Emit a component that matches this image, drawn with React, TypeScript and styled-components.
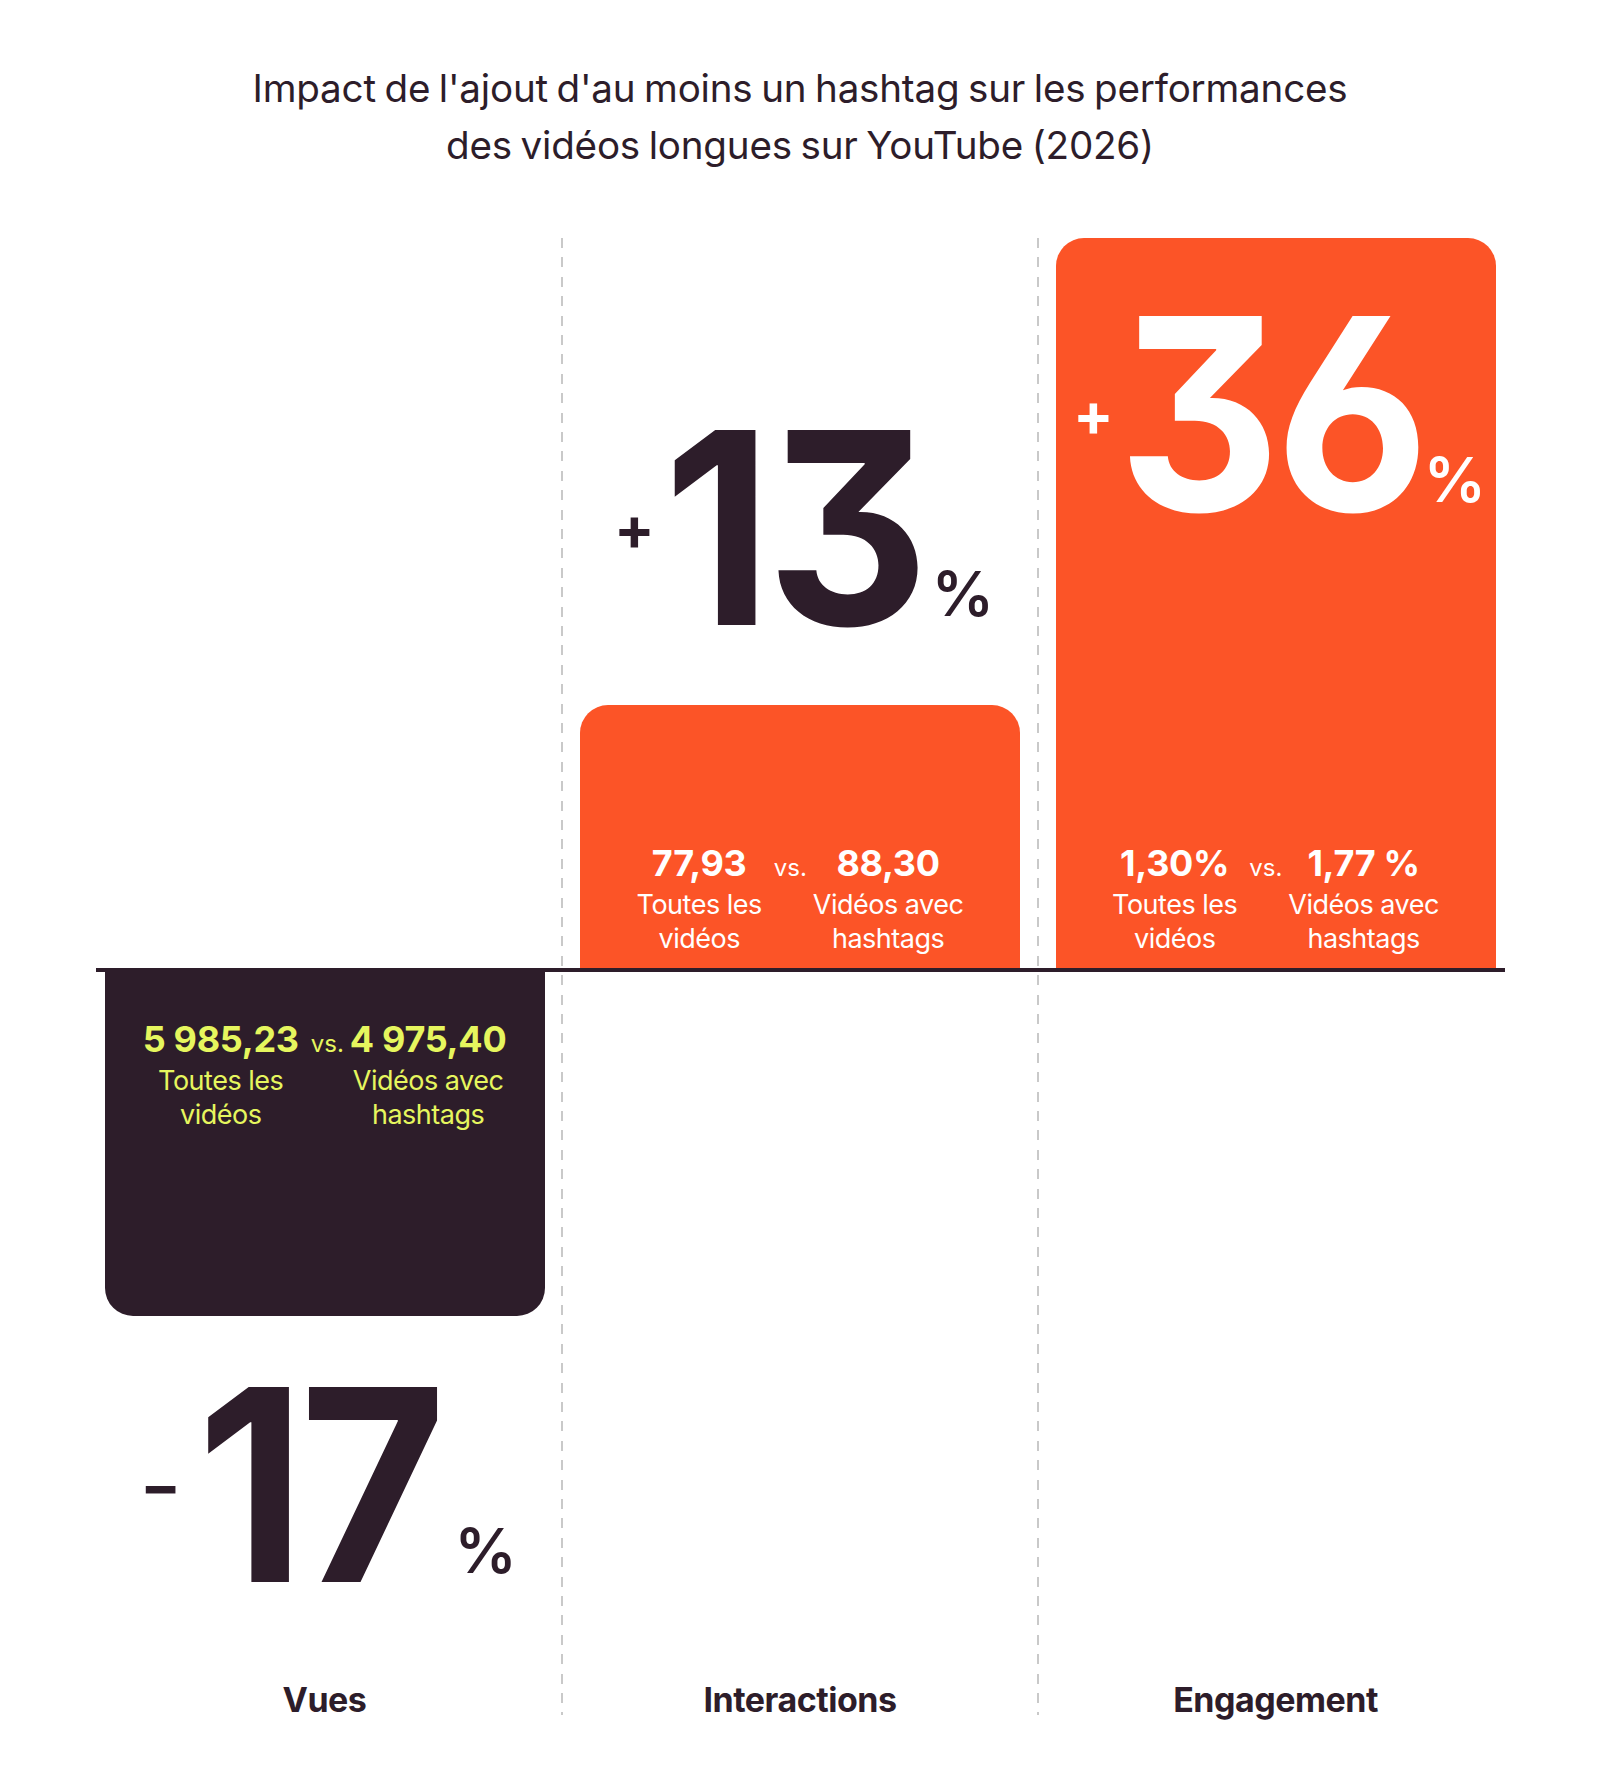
import React from "react";
import styled, { createGlobalStyle } from "styled-components";

const ORANGE = "#fc5427";
const DARK = "#2d1d2a";
const LIME = "#e6f65e";

const Global = createGlobalStyle`
  html, body { margin: 0; padding: 0; background: #ffffff; }
  body { font-family: Inter, "Noto Sans", sans-serif; color: ${DARK}; }
`;

const Page = styled.div`
  width: 1600px;
  min-height: 1778px;
  box-sizing: border-box;
  padding-top: 60px;
  display: flex;
  flex-direction: column;
  align-items: center;
`;

const Title = styled.h1`
  margin: 0;
  font-weight: 400;
  font-size: 38.6px;
  line-height: 57px;
  letter-spacing: -0.2px;
  word-spacing: -2px;
  text-align: center;
  color: ${DARK};
`;

const Chart = styled.div`
  margin-top: 64px;
  display: grid;
  grid-template-columns: 440px 35.5px 440px 35.5px 440px;
  grid-template-rows: 730px 4px 713px 30px;
`;

const Divider = styled.div<{ $col: number }>`
  grid-column: ${(p) => p.$col};
  grid-row: 1 / 5;
  justify-self: center;
  width: 2px;
  background: repeating-linear-gradient(
    to bottom,
    #c9c9c9 0 10px,
    transparent 10px 19.4px
  );
`;

const Baseline = styled.div`
  grid-column: 1 / 6;
  grid-row: 2;
  margin: 0 -9px;
  background: ${DARK};
  z-index: 1;
`;

const Cell = styled.div<{ $col: number; $row: number; $align: "start" | "end" }>`
  grid-column: ${(p) => p.$col};
  grid-row: ${(p) => p.$row};
  display: flex;
  flex-direction: column;
  justify-content: ${(p) => (p.$align === "end" ? "flex-end" : "flex-start")};
`;

const Bar = styled.div<{ $tone: "orange" | "dark"; $dir: "up" | "down"; $h?: number }>`
  box-sizing: border-box;
  height: ${(p) => (p.$h ? `${p.$h}px` : "100%")};
  background: ${(p) => (p.$tone === "orange" ? ORANGE : DARK)};
  border-radius: ${(p) => (p.$dir === "up" ? "28px 28px 0 0" : "0 0 28px 28px")};
  display: flex;
  flex-direction: column;
  justify-content: ${(p) => (p.$dir === "up" ? "space-between" : "flex-start")};
  align-items: stretch;
  padding: ${(p) => (p.$dir === "up" ? "0 0 12px" : "47px 0 0")};
`;

const Stats = styled.div<{ $color: string }>`
  margin-top: auto;
  display: grid;
  grid-template-columns: auto auto auto;
  column-gap: 12px;
  justify-content: center;
  justify-items: center;
  align-items: baseline;
  color: ${(p) => p.$color};
`;

const StatsTop = styled(Stats)`
  margin-top: 0;
`;

const Value = styled.div`
  font-size: 36px;
  font-weight: 700;
  line-height: 40px;
  letter-spacing: -0.3px;
  margin-bottom: 5px;
`;

const Vs = styled.div`
  font-size: 24px;
  font-weight: 400;
  line-height: 40px;
  margin-right: -6px;
`;

const Caption = styled.div<{ $col: number }>`
  grid-column: ${(p) => p.$col};
  font-size: 27px;
  font-weight: 400;
  line-height: 34px;
  letter-spacing: -0.5px;
  text-align: center;
`;

const BigNumber = styled.div<{ $color: string; $gapTop?: number; $gapBottom?: number }>`
  display: flex;
  align-items: flex-end;
  justify-content: center;
  color: ${(p) => p.$color};
  margin-top: ${(p) => p.$gapTop ?? 0}px;
  margin-bottom: ${(p) => p.$gapBottom ?? 0}px;
  padding-left: 8px;
`;

const Sign = styled.span<{ $gap: number }>`
  align-self: center;
  font-size: 60px;
  font-weight: 700;
  line-height: 1;
  margin-right: ${(p) => p.$gap}px;
`;

const Digits = styled.span`
  display: inline-block;
  font-size: 268px;
  font-weight: 700;
  line-height: 1;
  letter-spacing: -6px;
  font-feature-settings: "cv09", "cv03", "ss01";
  transform: scaleX(0.94);
`;

const Pct = styled.span<{ $gap: number }>`
  font-size: 62px;
  font-weight: 600;
  line-height: 1;
  margin-left: ${(p) => p.$gap}px;
  margin-bottom: 37px;
`;

const Label = styled.div<{ $col: number }>`
  grid-column: ${(p) => p.$col};
  grid-row: 4;
  text-align: center;
  font-size: 34px;
  font-weight: 700;
  line-height: 30px;
  letter-spacing: -0.5px;
  color: ${DARK};
`;

type StatProps = { a: string; b: string; color: string; top?: boolean };

function StatBlock({ a, b, color, top }: StatProps) {
  const Wrap = top ? StatsTop : Stats;
  return (
    <Wrap $color={color}>
      <Value>{a}</Value>
      <Vs>vs.</Vs>
      <Value>{b}</Value>
      <Caption $col={1}>
        Toutes les
        <br />
        vidéos
      </Caption>
      <Caption $col={3}>
        Vidéos avec
        <br />
        hashtags
      </Caption>
    </Wrap>
  );
}

type BigProps = {
  sign: string;
  digits: string;
  color: string;
  signGap: number;
  pctGap: number;
  gapTop?: number;
  gapBottom?: number;
};

function Big({ sign, digits, color, signGap, pctGap, gapTop, gapBottom }: BigProps) {
  return (
    <BigNumber $color={color} $gapTop={gapTop} $gapBottom={gapBottom}>
      <Sign $gap={signGap}>{sign}</Sign>
      <Digits>{digits}</Digits>
      <Pct $gap={pctGap}>%</Pct>
    </BigNumber>
  );
}

export default function App() {
  return (
    <Page>
      <Global />
      <Title>
        Impact de l'ajout d'au moins un hashtag sur les performances
        <br />
        des vidéos longues sur YouTube (2026)
      </Title>
      <Chart>
        <Divider $col={2} />
        <Divider $col={4} />

        <Cell $col={3} $row={1} $align="end">
          <Big sign="+" digits="13" color={DARK} signGap={0} pctGap={0} gapBottom={43} />
          <Bar $tone="orange" $dir="up" $h={263}>
            <StatBlock a="77,93" b="88,30" color="#ffffff" />
          </Bar>
        </Cell>

        <Cell $col={5} $row={1} $align="end">
          <Bar $tone="orange" $dir="up">
            <Big sign="+" digits="36" color="#ffffff" signGap={-6} pctGap={-10} gapTop={42} />
            <StatBlock a="1,30%" b="1,77 %" color="#ffffff" />
          </Bar>
        </Cell>

        <Baseline />

        <Cell $col={1} $row={3} $align="start">
          <Bar $tone="dark" $dir="down" $h={344}>
            <StatBlock a="5 985,23" b="4 975,40" color={LIME} top />
          </Bar>
          <Big sign="−" digits="17" color={DARK} signGap={8} pctGap={6} gapTop={35} />
        </Cell>

        <Label $col={1}>Vues</Label>
        <Label $col={3}>Interactions</Label>
        <Label $col={5}>Engagement</Label>
      </Chart>
    </Page>
  );
}
